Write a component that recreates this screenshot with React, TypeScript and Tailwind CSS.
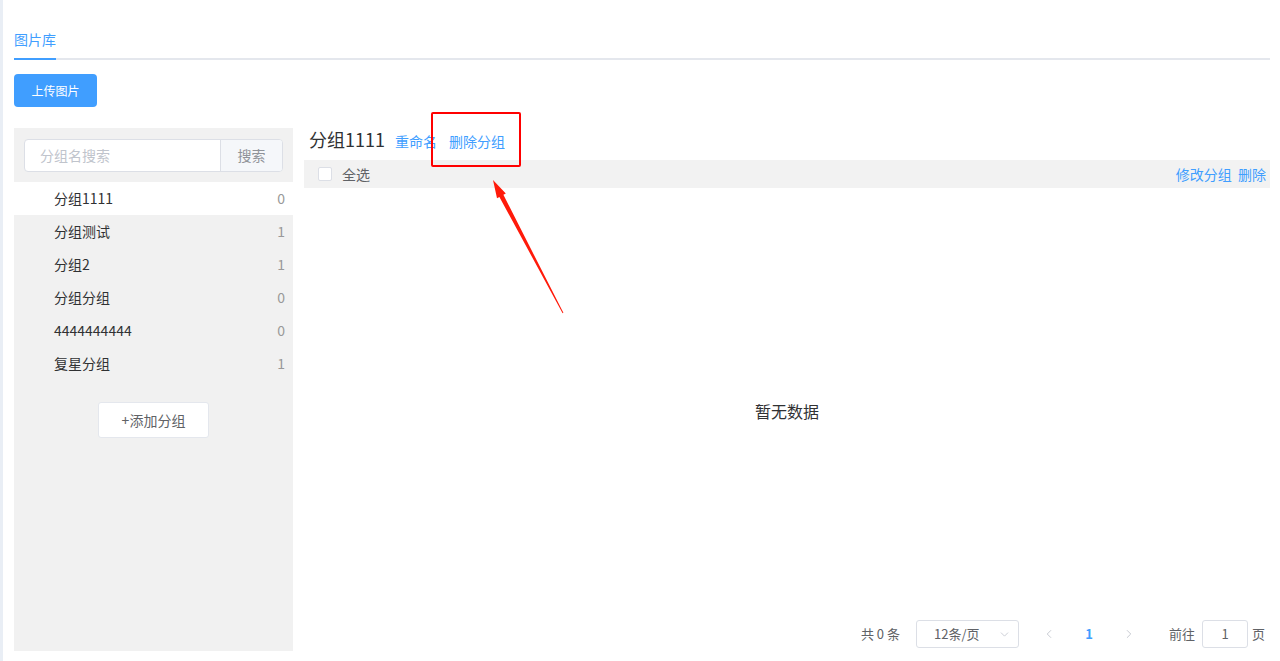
import { ChevronDown, ChevronLeft, ChevronRight } from 'lucide-react';

type Group = {
  name: string;
  count: number;
};

const groups: Group[] = [
  { name: '分组1111', count: 0 },
  { name: '分组测试', count: 1 },
  { name: '分组2', count: 1 },
  { name: '分组分组', count: 0 },
  { name: '4444444444', count: 0 },
  { name: '复星分组', count: 1 },
];

const GroupSidebar = () => (
  <div className="w-[279px] h-[523px] bg-[#f1f1f1] flex flex-col shrink-0">
    <div className="pt-[11px] px-[10px] pb-[10px]">
      <div className="flex h-[33px] border border-[#dcdfe6] rounded-[4px] overflow-hidden bg-white">
        <input
          placeholder="分组名搜索"
          className="flex-1 min-w-0 px-[15px] text-[14px] text-[#606266] placeholder:text-[#c0c4cc] outline-none"
        />
        <button className="w-[62px] border-l border-[#dcdfe6] bg-[#f5f7fa] text-[14px] text-[#909399]">
          搜索
        </button>
      </div>
    </div>
    {groups.map((group, i) => (
      <div
        key={group.name}
        className={`h-[33px] flex items-center justify-between pl-[40px] pr-[8px] text-[14px] ${
          i === 0 ? 'bg-white' : ''
        }`}
      >
        <span className="text-[#303133]">{group.name}</span>
        <span className="text-[#999]">{group.count}</span>
      </div>
    ))}
    <div className="flex justify-center mt-[22px]">
      <button className="w-[111px] h-[36px] bg-white border border-[#e4e7ed] rounded-[3px] text-[14px] text-[#606266]">
        +添加分组
      </button>
    </div>
  </div>
);

const Pagination = () => (
  <div className="h-[28px] mb-[3px] flex items-center justify-end pr-[5px] text-[13px] text-[#606266]">
    <span className="mr-[16px] whitespace-pre">共 0 条</span>
    <div className="w-[103px] h-[28px] border border-[#dcdfe6] rounded-[3px] flex items-center justify-between pl-[17px] pr-[7px]">
      <span className="text-[#606266]">12条/页</span>
      <ChevronDown size={13} strokeWidth={1.5} className="text-[#c0c4cc]" />
    </div>
    <div className="ml-[10px] w-[40px] flex justify-center">
      <ChevronLeft size={14} strokeWidth={1.5} className="text-[#c0c4cc]" />
    </div>
    <div className="w-[40px] flex justify-center font-bold text-[#409eff]">1</div>
    <div className="w-[40px] flex justify-center">
      <ChevronRight size={14} strokeWidth={1.5} className="text-[#c0c4cc]" />
    </div>
    <span className="ml-[20px]">前往</span>
    <div className="ml-[7px] w-[46px] h-[28px] border border-[#dcdfe6] rounded-[3px] flex items-center justify-center text-[#606266]">
      1
    </div>
    <span className="ml-[4px]">页</span>
  </div>
);

const GroupContent = () => (
  <div className="flex-1 ml-[11px] h-[523px] flex flex-col">
    <div className="flex items-baseline pl-[5px] pb-[8px]">
      <span className="text-[18px] leading-[22px] text-[#303133]">分组1111</span>
      <span className="ml-[10px] text-[14px] text-[#409eff]">重命名</span>
      <span className="ml-[12px] text-[14px] text-[#409eff]">删除分组</span>
    </div>
    <div className="h-[28px] bg-[#f2f2f2] flex items-center justify-between pl-[14px] pr-[4px] text-[14px]">
      <div className="flex items-center">
        <span className="w-[14px] h-[14px] bg-white border border-[#dcdfe6] rounded-[2px]" />
        <span className="ml-[10px] text-[#606266]">全选</span>
      </div>
      <span className="text-[#409eff] whitespace-pre">修改分组  删除</span>
    </div>
    <div className="flex-1 flex items-center justify-center pt-[14px] text-[16px] text-[#303133]">
      暂无数据
    </div>
    <Pagination />
  </div>
);

const App = () => (
  <div
    className="relative flex h-[661px] w-[1280px] bg-white overflow-hidden"
    style={{ fontFamily: '"Noto Sans CJK SC", "Noto Sans", sans-serif' }}
  >
    <div className="w-[3px] bg-[#e9eef5] shrink-0" />
    <div className="w-[1256px] ml-[11px] flex flex-col">
      <div className="pt-[28px] flex border-b-2 border-[#e4e7ed]">
        <div className="text-[14px] leading-[22px] pb-[8px] -mb-[2px] border-b-2 border-[#409eff] text-[#409eff]">
          图片库
        </div>
      </div>
      <div className="mt-[14px]">
        <button className="w-[83px] h-[33px] rounded-[4px] bg-[#409eff] text-white text-[12px]">
          上传图片
        </button>
      </div>
      <div className="mt-[21px] flex">
        <GroupSidebar />
        <GroupContent />
      </div>
    </div>

    {/* annotation overlay */}
    <div className="absolute left-[431px] top-[112px] w-[90px] h-[55px] border-2 border-[#ff0000] rounded-[2px] pointer-events-none" />
    <svg className="absolute left-0 top-0 pointer-events-none" width="1280" height="661">
      <polygon
        points="493,180 505.8,193.6 503.4,194.8 563.4,312.8 562.6,313.2 499.4,197 497,198.2"
        fill="#ff1a0a"
      />
    </svg>
  </div>
);

export default App;
